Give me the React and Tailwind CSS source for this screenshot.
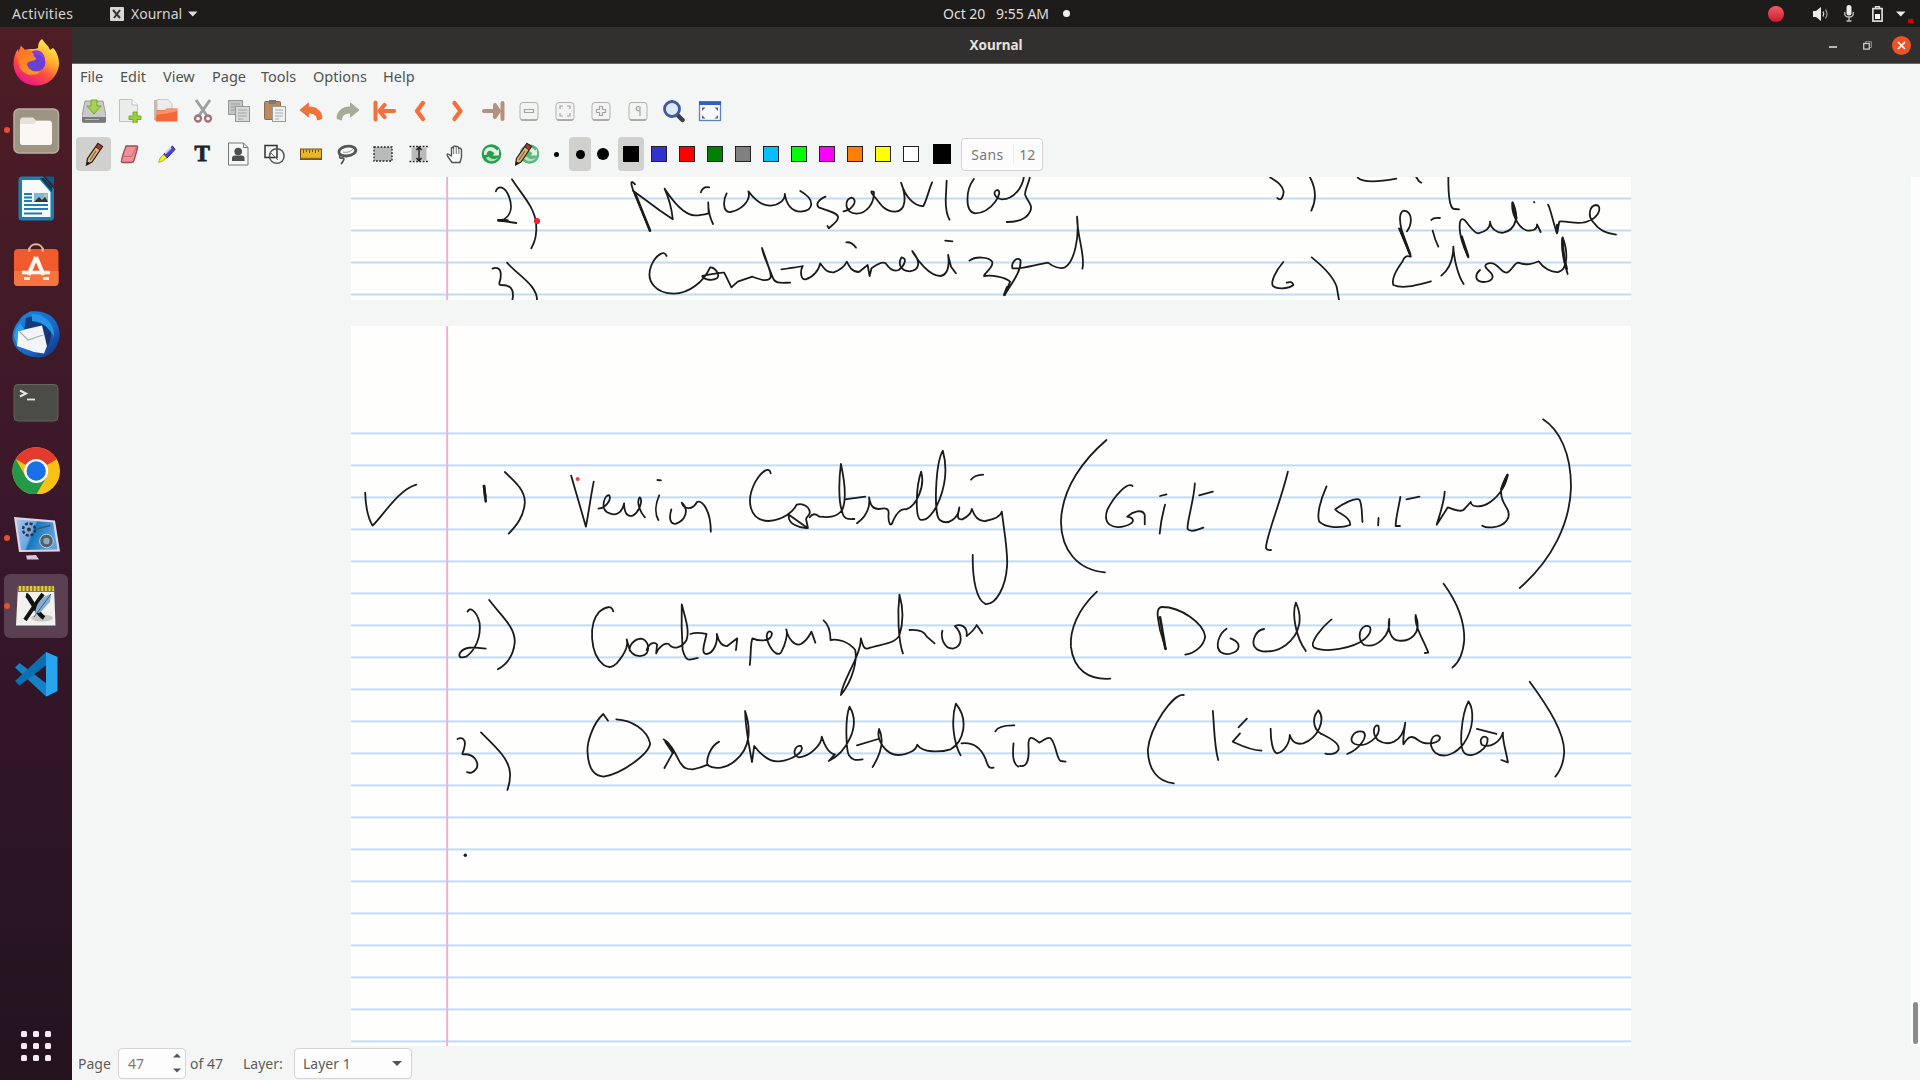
import React from "react";

const INK = "#1b1b1b";

/* ---------- handwriting ---------- */

function Strokes({ transform, thin = [], bold = [] }) {
  return (
    <g transform={transform} fill="none" stroke={INK} strokeLinecap="round" strokeLinejoin="round">
      {thin.map((d, i) => (
        <path key={i} d={d} strokeWidth="1.8" vectorEffect="non-scaling-stroke" />
      ))}
      {bold.map((d, i) => (
        <path key={"b" + i} d={d} strokeWidth="2.6" vectorEffect="non-scaling-stroke" />
      ))}
    </g>
  );
}

const upperLeft = [
  "M301 64 C305 45 320 48 328 80 C336 110 332 135 318 148 L306 151 L343 159",
  "M334 28 C355 75 380 110 384 160 C386 190 382 215 374 235",
  "M588 43 C580 30 578 35 584 60 L619 182",
  "M584 62 L640 122 L666 148 C664 120 658 85 649 56 C660 80 675 108 688 122 C705 140 715 139 740 130 L739 97 C739 125 743 145 749 162",
  "M724 67 C727 52 733 50 741 52",
  "M777 70 C770 90 768 128 785 126 C805 120 828 95 822 64 C835 90 850 108 868 107 C885 105 898 90 897 72 C900 100 910 125 930 125 C958 122 960 88 929 63",
  "M981 80 C965 90 960 105 968 113 C985 122 1008 128 1007 143 C1004 162 992 165 988 175 L985 168",
  "M1018 124 C1040 118 1048 88 1035 83 C1020 85 1018 128 1045 131 C1066 130 1082 100 1081 66 C1072 60 1075 70 1085 85 C1095 105 1105 126 1125 125 C1148 122 1148 80 1137 38 C1145 80 1165 110 1183 108 C1190 90 1195 55 1201 37",
  "M1231 32 L1229 90 Q1229 130 1237 149",
  "M1287 27 C1270 60 1268 125 1290 130 C1325 128 1350 62 1335 60 C1325 65 1330 85 1345 88 C1370 88 1390 50 1391 10",
  "M1404 10 C1402 40 1391 60 1393 75 C1398 95 1410 105 1403 125 C1395 150 1375 156 1355 156",
  "M294 296 C302 290 312 295 311 315 C312 335 303 343 312 345 C330 345 340 355 335 390",
  "M324 278 C350 320 385 345 386 390",
  "M653 258 C650 240 632 252 622 285 C608 335 632 370 668 371 C700 370 730 335 743 292 C752 290 765 315 757 325 C745 335 725 325 727 318 C745 314 765 305 772 308 L787 352 L800 335 L830 320 C845 328 862 338 868 322 C870 300 852 260 850 234 C855 250 862 290 873 325 C878 342 890 338 908 338",
  "M890 298 C905 295 930 290 934 288 C928 305 930 330 940 328 C955 322 968 300 970 280 C980 300 985 308 998 307 C1012 300 1020 290 1025 275 C1030 290 1035 305 1050 306 L1068 285 L1072 318 L1076 295 C1090 280 1100 275 1105 280 C1112 295 1120 308 1132 300 C1145 285 1150 265 1138 262 C1130 280 1135 303 1155 304 C1176 300 1178 275 1160 243 C1170 270 1195 318 1218 318 C1234 315 1237 285 1234 255 L1240 290 L1250 310",
  "M1024 217 Q1035 215 1044 233",
  "M1228 212 L1243 214",
  "M1278 272 C1290 258 1318 260 1325 275 C1328 295 1310 305 1308 318 C1325 315 1350 320 1362 335 L1350 376 C1365 340 1387 300 1383 270 C1375 258 1363 280 1367 295 C1385 298 1410 285 1440 278 C1450 290 1465 298 1475 292 C1495 275 1505 200 1500 140 C1500 200 1518 260 1511 296",
];
const upperLeftBold = ["M588 70 L619 182", "M306 151 L325 152", "M1356 352 L1350 374"];

const upperRight = [
  "M150 22 C170 35 188 45 191 65 C190 82 182 95 172 84",
  "M270 22 C285 50 292 85 274 122",
  "M413 23 C430 40 480 35 529 26",
  "M588 20 L597 34 L604 38",
  "M685 20 C685 60 686 120 705 117 L717 118",
  "M561 184 C578 160 577 125 552 122 C538 125 537 150 545 180 L572 258 L537 175",
  "M634 150 Q640 142 660 144",
  "M638 182 Q644 208 655 230",
  "M745 262 C732 235 720 205 719 175 C718 155 722 143 732 149 C745 160 760 190 775 190 C795 185 812 175 810 155 C812 175 830 190 850 188 C888 180 898 140 878 97 C872 120 890 172 920 181 C940 184 952 178 951 163 L962 186",
  "M942 96 L943 97",
  "M984 104 C990 110 1000 160 1011 190 L1018 155 C1035 150 1080 168 1105 153 C1138 142 1148 107 1128 105 C1108 108 1102 138 1120 157 C1140 185 1165 192 1188 194",
  "M572 260 C560 255 552 260 547 275 C525 305 515 330 520 345 C550 358 590 345 633 334",
  "M664 317 C685 300 700 270 700 230 C702 270 715 320 731 342",
  "M780 300 C763 315 765 335 790 336 C815 335 825 322 812 308 C795 292 790 285 805 280 C835 275 840 308 860 308 C875 305 882 278 895 278 C920 288 940 280 956 274 C970 295 995 308 1015 306 C1042 300 1046 250 1028 202 C1022 230 1030 270 1043 312",
  "M190 276 C165 305 153 335 158 347 C167 358 205 358 220 345 C218 335 210 335 200 338",
  "M275 262 C310 290 340 320 350 350 L357 390",
];
const upperRightBold = ["M541 178 L570 252", "M725 200 L744 258", "M1028 206 Q1027 250 1040 296", "M878 99 L889 145", "M1012 165 L1011 186"];

const lowerLeft = [
  "M35 218 C36 260 42 295 52 317 C75 290 110 210 153 194",
  "M357 156 C385 190 405 215 403 250 C400 290 385 315 366 341",
  "M510 167 L544 320 C550 280 555 230 562 185",
  "M573 266 C588 265 604 240 598 226 C587 222 578 262 592 276 C612 292 628 278 632 250 C632 275 638 292 652 287 C668 275 676 240 668 232 C660 245 668 275 680 292",
  "M713 226 C705 250 702 280 711 300",
  "M709 180 L717 181",
  "M741 268 C735 295 738 315 752 311 C775 300 782 268 765 248 C770 268 790 272 800 246 C812 240 832 270 832 335",
  "M970 160 C968 140 950 150 935 185 C912 240 920 302 965 303 C1000 300 1022 275 1030 254 C1045 248 1062 262 1060 280 C1058 290 1050 290 1052 300 L1056 324 C1038 326 1008 312 1012 284 L1055 324",
  "M1060 292 C1066 280 1074 280 1082 290 C1100 292 1120 295 1135 270 C1145 240 1140 180 1132 132 C1128 170 1125 240 1135 275 C1138 300 1150 297 1163 297",
  "M1141 238 L1188 230",
  "M1169 310 C1190 290 1200 265 1197 232 C1200 255 1205 268 1220 267 C1236 263 1243 265 1242 280 C1240 310 1248 325 1252 303 C1260 280 1270 265 1282 268 C1305 260 1327 200 1317 155 C1305 200 1303 290 1315 299 C1345 310 1388 190 1367 92 C1350 130 1345 285 1360 300 C1380 320 1405 290 1405 262 C1400 290 1400 300 1412 298 C1425 290 1432 280 1434 267 C1440 290 1450 305 1465 303 C1485 298 1500 290 1503 275 C1508 330 1518 400 1515 440 C1512 500 1490 555 1465 552 C1445 540 1435 480 1436 405",
  "M1432 179 Q1440 165 1460 164",
  "M271 575 C275 560 292 570 299 610 C302 650 290 690 268 710 C255 715 250 712 253 700 C262 680 280 680 313 686",
  "M321 540 C350 590 380 620 380 665 C378 700 365 730 341 748",
  "M607 574 C603 555 590 560 575 575 C550 610 552 700 585 735 C598 745 605 742 615 730 C635 700 642 675 638 658 L645 690 C655 712 675 712 684 700 C692 680 685 658 670 656 C655 658 643 675 645 692",
  "M684 690 C690 668 702 664 708 674 L706 700 C712 680 725 668 735 672 C745 690 765 685 776 660 C784 630 772 590 765 553 C764 600 765 650 767 690 C775 725 780 722 802 714",
  "M785 642 C800 635 815 640 822 642 C818 670 808 700 822 702 C838 700 848 670 846 642 C850 665 858 680 870 678 L893 655 L890 690",
  "M922 735 C925 700 923 670 928 655 C945 665 972 665 973 640 C967 625 955 640 965 670 C975 700 990 710 995 695 C1005 670 1010 640 1006 628 C1010 655 1025 680 1040 672 C1055 660 1060 645 1064 635 L1073 668",
  "M1092 601 C1105 615 1108 635 1108 660 C1125 655 1150 665 1165 690 C1170 720 1160 780 1132 825 C1135 780 1178 710 1178 655 C1182 675 1185 690 1195 685 C1225 672 1258 672 1267 645 C1278 600 1275 560 1267 524 C1262 580 1264 660 1275 700",
  "M1290 630 C1310 628 1325 635 1330 650 L1348 670",
  "M1366 632 C1362 650 1368 685 1390 686 C1415 680 1412 640 1395 618 C1405 612 1425 615 1422 648 C1430 640 1440 630 1445 615 L1458 640",
  "M248 957 C258 950 268 958 264 980 C262 1000 255 1003 262 1003 C285 1000 298 1025 292 1045 C285 1060 275 1060 270 1056",
  "M302 937 C340 985 368 1020 369 1060 C370 1080 367 1095 363 1110",
  "M595 902 L584 882 C560 910 545 970 548 1000 C550 1050 565 1068 585 1070 C630 1060 690 1000 692 970 C685 930 650 900 614 898",
  "M723 958 C740 970 750 1000 760 1025 C770 1045 775 1048 790 1048 C805 1045 815 1040 825 1034",
  "M725 1044 L746 995",
  "M851 965 C830 980 820 1020 825 1036 C840 1050 870 1045 890 1020 C922 985 926 930 911 873 C912 930 922 990 927 1026 L932 978 C945 1000 965 1028 990 1024 C1020 1020 1050 995 1040 978 C1025 975 1018 1005 1035 1012 C1060 1010 1087 975 1088 950 C1095 980 1105 1000 1118 1003 L1104 1023 C1142 1000 1180 920 1152 860 C1140 900 1145 990 1150 1005 C1160 1025 1170 1020 1182 1018",
  "M1169 976 L1218 957",
  "M1205 1041 C1225 1000 1232 960 1220 927 C1213 960 1235 1005 1265 1005 C1290 1003 1305 990 1308 974 C1320 998 1360 998 1385 988 C1415 965 1428 900 1397 851 C1385 900 1392 970 1408 1006",
  "M1410 970 C1440 965 1455 985 1465 1015 C1472 1045 1475 1045 1484 1043",
  "M1488 934 Q1495 915 1532 916",
  "M1530 970 C1528 1000 1527 1030 1541 1040",
];
const lowerLeftBold = ["M309 198 L313 244", "M309 198 L312 230", "M728 965 L745 998"];

const lowerRight = [
  "M226 120 C170 175 110 260 107 365 C108 450 150 510 222 517",
  "M294 258 C280 245 245 290 228 330 C215 375 245 388 275 378 C300 370 302 355 280 350 C295 335 320 325 326 345 L326 373",
  "M379 314 Q368 360 365 401",
  "M366 288 L383 283",
  "M457 250 C455 300 435 370 438 387 C445 397 465 390 479 383",
  "M468 286 L504 275",
  "M700 215 C680 310 640 420 643 445 C645 452 650 450 656 450",
  "M801 259 C785 300 775 345 782 365 C800 385 840 385 863 375 C865 350 830 340 824 328 C845 310 880 290 888 300 C895 320 893 345 895 366",
  "M937 354 L936 376",
  "M994 291 C990 320 980 365 982 378 L993 378",
  "M1010 298 L1044 290",
  "M1110 275 C1108 310 1095 350 1089 374 L1118 322 C1135 328 1155 340 1163 325 L1178 306 C1180 325 1210 322 1230 305 C1255 285 1272 250 1274 223 C1255 260 1250 285 1270 320 C1288 350 1270 378 1235 382 C1220 383 1212 380 1208 377",
  "M1367 58 C1410 90 1440 160 1440 260 C1438 370 1390 480 1306 564",
  "M201 575 C150 630 130 690 133 740 C140 810 180 840 236 836",
  "M381 748 L366 690 C362 660 352 625 370 621 C420 620 480 670 484 710 C480 740 455 760 432 764",
  "M540 686 C520 700 508 740 525 757 C545 770 575 755 571 735 C568 722 555 718 550 715",
  "M638 687 C615 690 605 725 613 740 C625 760 665 760 695 735 C735 700 738 650 721 608 C710 640 720 710 747 753",
  "M814 658 C790 680 755 730 768 742 C800 760 870 745 900 718 C922 695 920 675 903 678 C883 688 883 722 900 735 C930 745 970 710 965 657 C960 690 970 722 990 722 C1020 725 1052 700 1034 645 C1030 680 1055 720 1067 758 L1058 759",
  "M1107 551 C1145 610 1162 670 1161 720 C1158 760 1150 785 1130 803",
  "M428 885 C400 880 340 980 334 1050 C335 1110 360 1145 402 1150",
  "M504 933 C508 990 508 1040 518 1080",
  "M593 956 L571 982 M575 1000 L556 1025 C575 1035 600 1050 631 1052",
  "M655 986 C655 1020 660 1058 672 1060 C690 1055 705 1030 705 1005 C710 1025 720 1035 740 1030 C778 1015 800 960 780 931 C763 950 765 985 785 1000 C810 1015 838 1030 832 1050 C825 1062 810 1064 798 1061",
  "M855 1062 C885 1050 915 1005 895 995 C872 990 855 1022 875 1032 C905 1045 944 1010 937 978 C925 970 918 1000 935 1020 C960 1040 1000 1030 1007 968 C1003 1000 1000 1020 1002 1033 C1015 1008 1025 1005 1040 1020 C1060 1038 1102 1030 1097 1010 C1080 995 1062 1030 1085 1058 C1110 1078 1140 1060 1160 1030 C1187 985 1187 930 1172 904 C1155 940 1143 1050 1165 1062 C1185 1075 1225 1045 1222 1015 C1210 1000 1198 1020 1208 1035 C1230 1045 1255 1025 1262 998 C1260 1020 1270 1050 1275 1087 L1258 1080",
  "M1194 987 L1245 1002",
  "M1332 845 C1380 920 1425 1000 1422 1060 C1420 1090 1410 1115 1399 1130",
  "M0 1098 C18 1102 25 1080 22 1035 C22 1005 32 1010 50 1028 C65 1020 72 1008 80 1015 C95 1030 95 1080 107 1083 L119 1085",
];
const lowerRightBold = ["M366 652 L380 746", "M1274 226 L1258 268"];

const Rules = ({ from, count }) => (
  <g>
    {Array.from({ length: count }, (_, i) => (
      <rect key={i} x="351" y={from + i * 32} width="1280" height="2" fill="#bedcf6" />
    ))}
  </g>
);

const UpperPage = () => (
  <svg className="block shrink-0 bg-[#fefefd]" width="1280" height="123" viewBox="351 177 1280 123">
    <Rules from={197.5} count={4} />
    <rect x="446.2" y="177" width="1.9" height="123" fill="#f0abd6" />
    <Strokes transform="translate(350 170) scale(.4847 .33333)" thin={upperLeft} bold={upperLeftBold} />
    <Strokes transform="translate(1220 170) scale(.33333)" thin={upperRight} bold={upperRightBold} />
    <circle cx="537" cy="221" r="3.1" fill="#f8202c" />
  </svg>
);

const LowerPage = () => (
  <svg className="block shrink-0 bg-[#fefefd]" width="1280" height="720" viewBox="351 326 1280 720">
    <Rules from={432.4} count={20} />
    <rect x="446.2" y="326" width="1.9" height="720" fill="#f0abd6" />
    <Strokes transform="translate(350 420) scale(.43367 .33333)" thin={lowerLeft} bold={lowerLeftBold} />
    <Strokes transform="translate(1020 400) scale(.38265 .33333)" thin={lowerRight} bold={lowerRightBold} />
    <circle cx="577.7" cy="479" r="2" fill="#fb3b3b" />
    <circle cx="465.3" cy="855.3" r="1.7" fill={INK} />
  </svg>
);

/* ---------- dock icons (48 x 48) ---------- */

const Dock = ({ children }) => (
  <svg width="48" height="48" viewBox="0 0 48 48">
    {children}
  </svg>
);

const Firefox = () => (
  <Dock>
    <defs>
      <linearGradient id="fx" x1=".85" y1=".05" x2=".3" y2="1">
        <stop offset="0" stopColor="#fff44f" />
        <stop offset=".35" stopColor="#ffb02e" />
        <stop offset=".65" stopColor="#ff4f3f" />
        <stop offset="1" stopColor="#e9138a" />
      </linearGradient>
      <linearGradient id="fxo" x1="0" y1="0" x2="1" y2="1">
        <stop offset="0" stopColor="#ff6a2a" />
        <stop offset="1" stopColor="#ffa31f" />
      </linearGradient>
    </defs>
    <path d="M30 1 C34 7 37 8 38 12 L41 10 C45 14 47 20 47 26 C46 39 36 47.500 24 47.500 C11 47.500 2 38 1.500 26 C1.500 20 3 15 6 11 L7 16 L9 8 L13 12 C18 10 22 12 26 10 C26 6 27 3 30 1 Z" fill="url(#fx)" />
    <circle cx="24" cy="24" r="9.500" fill="#6a3fd4" />
    <path d="M17 15 C24 9 34 13 33 24 C31 18 26 15 17 15Z" fill="#8d3ce0" />
    <path d="M5 17 L9 8 L13 12.500 C17 11 20 13 22 17 C20 19 25 19 24 21 C21 24 17 22 15 26 C16 32 22 35 29 33 C22 40 9 37 7 27Z" fill="url(#fxo)" />
  </Dock>
);
const Files = () => (
  <Dock>
    <rect x="2" y="3" width="44.500" height="44" rx="5" fill="#9d9483" />
    <rect x="2" y="3" width="44.500" height="44" rx="5" fill="none" stroke="#b8b09f" strokeWidth="1.500" />
    <path d="M8 15 Q8 11.500 11 11.500 H21 L24 14.500 H37 Q40 14.500 40 18 V36 Q40 39 37 39 H11 Q8 39 8 36Z" fill="#e7e1d8" />
    <path d="M8 18 H22 L25 15 H37 Q40 15 40 18 V36 Q40 39 37 39 H11 Q8 39 8 36Z" fill="#fbf8f3" />
  </Dock>
);
const Writer = () => (
  <Dock>
    <path d="M10 2.500 H31 L42 15 V43 Q42 46.500 38.500 46.500 H10 Q6.500 46.500 6.500 43 V6 Q6.500 2.500 10 2.500Z" fill="#1d7fae" />
    <path d="M33 2.500 H42 V12Z" fill="#0c5f86" />
    <path d="M10 6 H28 L38.500 18 V43 H10Z" fill="#f6fafc" />
    <path d="M28 4 L40 18 V13 L32 4Z" fill="#083f59" />
    <rect x="22" y="19" width="14" height="9" fill="#7fb9d4" />
    <path d="M22 28 L27 23 L30 26 L33 23 L36 28Z" fill="#333" />
    <circle cx="33.500" cy="21.500" r="1.300" fill="#f2d24b" />
    <path d="M12 20 h8 M12 23.500 h8 M12 27 h8 M12 31 h24 M12 35 h24 M12 39.500 h18" stroke="#217fae" strokeWidth="1.800" />
  </Dock>
);
const Software = () => (
  <Dock>
    <path d="M17 9 C17 0 31 0 31 9" fill="none" stroke="#e8b79a" strokeWidth="2" />
    <rect x="2" y="7" width="44.500" height="37" rx="4" fill="#f05a2d" />
    <path d="M2 29 H46.500 V40 Q46.500 44 42.500 44 H6 Q2 44 2 40Z" fill="#f7733f" />
    <path d="M17.300 10 V6 M30.700 10 V6" stroke="#e8b79a" strokeWidth="2" />
    <path d="M24 15 L16.500 33 M24 15 L31.500 33" stroke="#fff6ef" strokeWidth="4.200" fill="none" strokeLinejoin="round" />
    <path d="M10 30.500 H38" stroke="#fff6ef" strokeWidth="3.600" />
    <path d="M12 36.500 h6 M31 36.500 h6" stroke="#fff6ef" strokeWidth="3" />
  </Dock>
);
const Thunderbird = () => (
  <Dock>
    <defs>
      <linearGradient id="tb" x1="0" y1="0" x2="1" y2="1">
        <stop offset="0" stopColor="#1a8ae0" />
        <stop offset=".6" stopColor="#1868c4" />
        <stop offset="1" stopColor="#122a78" />
      </linearGradient>
    </defs>
    <path d="M18 1.500 C40 -1 49 14 47.500 27 C46 40 37 47 27 47.500 C12 47 1 39 .500 27 C1 20 3 15 7 11 C9 6 14 4 18 1.500Z" fill="url(#tb)" />
    <path d="M14 8 C26 3 40 11 39 26 C38 34 34 40 31 43 L12 22Z" fill="#15275f" opacity=".75" />
    <path d="M20 4 C34 4 43 15 42 27 C38 20 33 12 20 11Z" fill="#2496e8" />
    <path d="M6 21 L30 15.500 L35 36 L32 43.500 L22 42 L5 36Z" fill="#f3f4f8" />
    <path d="M7 21 L16 30 L31 25" fill="none" stroke="#a9aab8" strokeWidth="1.100" />
    <path d="M2 27 C2 21 5 17 8 13 L13 20 L6 21 L5 34Z" fill="#2a9df0" />
  </Dock>
);
const Terminal = () => (
  <Dock>
    <rect x="2" y="6.500" width="44" height="36.500" rx="4" fill="#4b4b47" stroke="#65655f" strokeWidth="1" />
    <path d="M8 12.500 L14 15.500 L8 18.500" fill="none" stroke="#e6e6e0" strokeWidth="2" />
    <path d="M15 21.500 H23" stroke="#e6e6e0" strokeWidth="1.800" />
  </Dock>
);
const Chrome = () => (
  <Dock>
    <circle cx="24.200" cy="25" r="23.800" fill="#fbc116" />
    <path d="M24.200 25 L3.600 13.100 A23.800 23.800 0 0 1 44.800 13.100 Z" fill="#e33b2e" />
    <path d="M24.200 13.100 H44.800 L24.200 25Z" fill="#e33b2e" />
    <path d="M3.600 13.100 A23.800 23.800 0 0 0 24.200 48.800 L34.500 31 L13.900 31Z" fill="#229a4a" />
    <circle cx="24.200" cy="25" r="12" fill="#fff" />
    <circle cx="24.200" cy="25" r="9.700" fill="#1a70e6" />
  </Dock>
);
const Screencast = () => (
  <Dock>
    <defs>
      <linearGradient id="sc" x1="0" y1="0" x2="1" y2=".3">
        <stop offset="0" stopColor="#a8c5ee" />
        <stop offset=".45" stopColor="#6aa5e2" />
        <stop offset=".5" stopColor="#1478bd" />
        <stop offset="1" stopColor="#5fa0dd" />
      </linearGradient>
    </defs>
    <g transform="translate(0 1.500)">
      <path d="M2 1.500 L43 5 L48 36 L7 36.500Z" fill="#dcd5e4" />
      <path d="M4.500 4 L41 7 L45.500 34 L9 34.500Z" fill="url(#sc)" />
      <circle cx="17" cy="14" r="6" fill="none" stroke="#27364a" strokeWidth="2.500" strokeDasharray="3 1.700" />
      <circle cx="17" cy="14" r="2" fill="#333" />
      <path d="M23 14 L38 10" stroke="#3a5676" strokeWidth="1.500" />
      <circle cx="34.500" cy="25.500" r="6.800" fill="#4b6172" stroke="#c3ced8" strokeWidth="1" />
      <circle cx="34.500" cy="25.500" r="3.200" fill="#96a6b3" />
      <path d="M14 40 L24 39.500 L27 44 L15 44Z" fill="#cfc8d6" />
    </g>
  </Dock>
);
const XournalIcon = () => (
  <Dock>
    <path d="M6 4 H42 L43.500 43.500 H4Z" fill="#f1f1ef" />
    <path d="M6 4 L42 4 L42.300 10 H5.700Z" fill="#8b7a2a" />
    <path d="M7 6.500 H42" stroke="#dfc94f" strokeWidth="5" strokeDasharray="2 1.700" />
    <ellipse cx="30" cy="36" rx="11" ry="3.500" fill="#c7c7c4" />
    <path d="M14 13 C18 14 23 30 32 36" fill="none" stroke="#111" strokeWidth="4.500" />
    <path d="M31 12 C25 20 20 28 13 38" fill="none" stroke="#111" strokeWidth="4" />
    <path d="M39 12 C30 14 24 21 23 32 L29 30 L34 24 L38 20Z" fill="#86aed0" />
    <path d="M39 12 L22 35" stroke="#3f5f80" strokeWidth="1" />
  </Dock>
);
const VsCode = () => (
  <Dock>
    <path d="M34 2 L45 7 V41 L34 46.500 L3 17.500 L7.500 13 L35 34 V14 Z" fill="#1582c8" />
    <path d="M34 2 L3 31 L7.500 35.500 L35 14.500 Z" fill="#0a6fb4" />
    <path d="M34 2 L45.500 7 V41 L34 46.500 Z" fill="#29a5ee" />
  </Dock>
);

const dockItems = [
  { icon: Firefox },
  { icon: Files, running: true },
  { icon: Writer },
  { icon: Software },
  { icon: Thunderbird },
  { icon: Terminal },
  { icon: Chrome },
  { icon: Screencast, running: true },
  { icon: XournalIcon, running: true, active: true },
  { icon: VsCode },
];

const Sidebar = () => (
  <aside className="flex w-[72px] shrink-0 flex-col items-center bg-gradient-to-b from-[#4f1d24] via-[#38172b] to-[#22131f] pt-px">
    {dockItems.map(({ icon: Icon, running, active }, i) => (
      <div key={i} className="grid h-[68px] w-full grid-cols-[4px_64px_4px] items-center">
        <span />
        <div className={active ? "relative flex h-16 items-center justify-center rounded-md bg-[#5a4050]" : "relative flex h-16 items-center justify-center"}>
          {running && <span className="absolute left-0 h-1.5 w-1.5 rounded-full bg-[#e2532c]" />}
          <Icon />
        </div>
      </div>
    ))}
    <div className="mt-auto mb-[19px] grid grid-cols-3 gap-[6px]">
      {Array.from({ length: 9 }, (_, i) => (
        <span key={i} className="h-[6px] w-[6px] rounded-[1.500px] bg-[#f7ecf3]" />
      ))}
    </div>
  </aside>
);

/* ---------- toolbar icons (24 x 24) ---------- */

const Ico = ({ children }) => (
  <svg width="24" height="24" viewBox="0 0 24 24" fill="none">
    {children}
  </svg>
);

const mainIcons = [
  <Ico>
    <path d="M3 2 H21 L24 17 V22 Q24 23.500 22 23.500 H2 Q0 23.500 0 22 V17Z" fill="#c9c9c7" stroke="#8c8c8a" strokeWidth=".8" />
    <path d="M0 18 H24 V22 Q24 23.500 22 23.500 H2 Q0 23.500 0 22Z" fill="#77787a" />
    <path d="M3 20.500 h14" stroke="#b5b5b5" />
    <path d="M9 1 H15 V7 H19 L12 15 L5 7 H9Z" fill="#a3d44c" stroke="#6b9a20" strokeWidth=".8" />
  </Ico>,
  <Ico>
    <path d="M1.500 .500 H14 L19.500 6 V22.500 H1.500Z" fill="#ececea" stroke="#c1c1bf" />
    <path d="M14 .500 V6 H19.500" fill="#fff" stroke="#c1c1bf" />
    <path d="M15 13 h4 v4 h4 v3.500 h-4 v4 h-4 v-4 h-4 V17 h4Z" fill="#9bd03c" stroke="#6a9c20" strokeWidth=".8" />
  </Ico>,
  <Ico>
    <path d="M0 1 H7 V21 H0Z" fill="#c8b9ae" />
    <path d="M3 .500 H14 L18 5 V16 H3Z" fill="#ececec" stroke="#bdbdbd" strokeWidth=".8" />
    <path d="M1.500 22.500 L3 11 H11 L12.500 9.500 H23.500 V22.500Z" fill="#f4673a" />
    <path d="M2.500 16 C10 14 16 15 23 12 V10 H12.500 L11 11.500 H3.500Z" fill="#f99368" />
  </Ico>,
  <Ico>
    <path d="M5 1 L15.500 16 M19 1 L8.500 16" stroke="#9d9fa0" strokeWidth="3" />
    <circle cx="7" cy="19.500" r="3" stroke="#a2717a" strokeWidth="2.300" />
    <circle cx="17" cy="19.500" r="3" stroke="#a2717a" strokeWidth="2.300" />
  </Ico>,
  <Ico>
    <rect x="1.500" y="1.500" width="14" height="14" fill="#c4c6c5" stroke="#969897" />
    <path d="M4 5 h9 M4 8 h9 M4 11 h9" stroke="#9b9d9c" />
    <rect x="8.500" y="7.500" width="14" height="15" fill="#d6d8d7" stroke="#969897" />
    <path d="M11 11 h9 M11 14 h9 M11 17 h9 M11 20 h5" stroke="#a1a3a2" />
  </Ico>,
  <Ico>
    <rect x="1.500" y="2.500" width="16" height="18" rx="1" fill="#b98a5e" stroke="#8f6a48" />
    <path d="M6 1 h7 v4 h-7Z" fill="#777a7c" />
    <rect x="9.500" y="7.500" width="13" height="15" fill="#f0f0ef" stroke="#9a9a98" />
    <path d="M12 11 h8 M12 14 h8 M12 17 h8 M12 20 h4" stroke="#aaa" />
  </Ico>,
  <Ico>
    <path d="M1 11 L9.500 4 V8 C17 7.500 23 12 23 19.500 L18.500 21 C18 16 15 14 9.500 14 V18Z" fill="#f37239" stroke="#e8622e" strokeWidth=".8" />
  </Ico>,
  <Ico>
    <path d="M23 11 L14.500 4 V8 C7 7.500 1 12 1 19.500 L5.500 21 C6 16 9 14 14.500 14 V18Z" fill="#a3ad97" stroke="#949f88" strokeWidth=".8" />
  </Ico>,
  <Ico>
    <path d="M3.500 3.500 V20.500" stroke="#f3703d" strokeWidth="4" strokeLinecap="round" />
    <path d="M22 12 H8 M12.500 6 L7.500 12 L12.500 18" stroke="#f3703d" strokeWidth="4.200" strokeLinecap="round" strokeLinejoin="round" />
  </Ico>,
  <Ico>
    <path d="M15 4 L9 12 L15 20" stroke="#f3703d" strokeWidth="4.400" strokeLinecap="round" strokeLinejoin="round" />
  </Ico>,
  <Ico>
    <path d="M10.500 4 L16.500 12 L10.500 20" stroke="#f3703d" strokeWidth="4.400" strokeLinecap="round" strokeLinejoin="round" />
  </Ico>,
  <Ico>
    <path d="M21.500 4 V20" stroke="#b4917f" strokeWidth="4" strokeLinecap="round" />
    <path d="M3 12 H17 M14 6 L18 12 L14 18Z" stroke="#b4917f" fill="#b4917f" strokeWidth="4" strokeLinecap="round" strokeLinejoin="round" />
  </Ico>,
  ...["M7.500 10.500 h9 v3 h-9Z", "M7 10 V7 h3 M14 7 h3 v3 M17 14 v3 h-3 M10 17 H7 v-3 M9.500 9.500 l.1 .1 M14.500 14.500 l.1 .1", "M10.500 7.500 h3 v3 h3 v3 h-3 v3 h-3 v-3 h-3 v-3 h3Z", "M10 9 Q11 7 14 8 V17 M10 9 Q10 12 14 12"].map((d, i) => (
    <Ico key={i}>
      <rect x="3" y="3.500" width="18" height="18" rx="3" fill="#f3f3f2" stroke="#b1b1af" />
      <path d="M4 20.800 H20" stroke="#9c9c9a" strokeWidth="1.200" />
      <path d={d} stroke="#a3a3a1" strokeWidth="1.200" />
    </Ico>
  )),
  <Ico>
    <path d="M14.500 15 L20.500 21" stroke="#3f4146" strokeWidth="4.500" strokeLinecap="round" />
    <circle cx="10" cy="10" r="7.500" fill="#dfe8f8" stroke="#3d5a9d" strokeWidth="2.800" />
  </Ico>,
  <Ico>
    <rect x="1.500" y="3" width="21" height="18.500" fill="#f7f9fc" stroke="#5e83bd" strokeWidth="1.300" />
    <rect x="1" y="2.300" width="22" height="3.700" fill="#2f60bd" />
    <path d="M4 12 V8.500 H7.500Z M20 12 V8.500 H16.500Z M4 16 V19.500 H7.500Z M20 16 V19.500 H16.500Z" fill="#666" />
  </Ico>,
];

const Recycle = ({ dim }) => (
  <>
    <circle cx="12.500" cy="12" r="9.800" fill={dim ? "#5bb980" : "#23a049"} />
    <path d="M5 13 C4 5 13 2 18 8.500 L20 7 V13.500 H13.500 L15.500 11.500 C12 7.500 8 8 7.500 13Z" fill="#dff3e2" />
    <path d="M19.500 15 C16 21 9 20 7 16 L9.500 14.500 C12 17.500 16 18 19.500 15Z" fill="#b5e2bf" />
  </>
);
const Pencil = () => (
  <>
    <path d="M16 1.500 L20.500 4.500 L10 20 L4.500 23 L5.500 16.500Z" fill="#dcb47c" stroke="#2e2418" strokeWidth="1.300" />
    <path d="M16 1.500 L20.500 4.500 L18 8 L13.700 5Z" fill="#9e3a35" stroke="#2e2418" strokeWidth=".8" />
    <path d="M14 9 L8 18" stroke="#8b5d22" strokeWidth="1.200" />
    <path d="M5.500 19.500 L4.500 23 L8 21Z" fill="#111" />
  </>
);

const toolIcons = [
  <Ico><Pencil /></Ico>,
  <Ico>
    <path d="M8 4 H18.500 Q20 4 19.500 6 L16 18.500 Q15.500 20.500 13.500 20.500 H5 Q3 20.500 3.500 18.500 L4.500 14Z" fill="#ef9094" stroke="#9d4a4e" strokeWidth="1.300" strokeLinejoin="round" />
    <path d="M4.500 14.500 H13.500 L18.500 5" stroke="#c5686d" />
  </Ico>,
  <Ico>
    <path d="M18.500 4 L21 7.500 L13 16 L9.500 12.500Z" fill="#4a49c9" stroke="#24236b" />
    <path d="M17 5.500 L11 11.500" stroke="#cdd0f5" strokeWidth="2" />
    <path d="M9.500 12.500 L13 16 L8 19.500 L4.500 20.500 L6 16Z" fill="#f4ee1c" stroke="#8b8720" strokeWidth=".6" />
  </Ico>,
  <span className="font-['Liberation_Serif',serif] text-[23px] leading-6 font-bold text-[#222] [-webkit-text-stroke:.8px_#222]">T</span>,
  <Ico>
    <path d="M2.500 1 H17.500 L22 5.500 V23 H2.500Z" fill="#f7f7f7" stroke="#777" />
    <path d="M17.500 1 V5.500 H22" stroke="#777" />
    <circle cx="12.200" cy="9.500" r="3.800" fill="#4c4e50" />
    <path d="M6 19 V16 Q6 13.500 9 13.500 H15.500 Q18.500 13.500 18.500 16 V19Z" fill="#4c4e50" />
  </Ico>,
  <Ico>
    <rect x="3" y="3.500" width="12" height="12" stroke="#303030" strokeWidth="1.500" />
    <circle cx="14.800" cy="14" r="7.300" stroke="#555" strokeWidth="1.500" />
    <path d="M8 10 L16 18" stroke="#666" />
  </Ico>,
  <Ico>
    <rect x="1.500" y="7" width="21" height="10.500" fill="#e9b52c" stroke="#6e5412" />
    <path d="M4.500 7.500 v3.500 M7.500 7.500 v2.500 M10.500 7.500 v3.500 M13.500 7.500 v2.500 M16.500 7.500 v3.500 M19.500 7.500 v2.500" stroke="#6e5412" />
    <path d="M2 16.500 H22" stroke="#8a6a16" strokeWidth="1.500" />
  </Ico>,
  <Ico>
    <path d="M4.500 12 C2 7 9 4 14 4.200 C20 4.500 23 8 19 11.500 C15 14.500 8 15 4.500 12Z" stroke="#555" strokeWidth="2.800" />
    <path d="M6 12 C4 14 4 16.500 7 16 C10 15.500 9 19 6 22" stroke="#555" strokeWidth="1.800" />
    <path d="M8 10 C11 11 15 10 18 7" stroke="#999" />
  </Ico>,
  <Ico>
    <rect x="3" y="5" width="18" height="14" fill="#b9b9b9" stroke="#222" strokeWidth="1.300" strokeDasharray="1.800 1.500" />
  </Ico>,
  <Ico>
    <rect x="4.500" y="5.500" width="15" height="13" fill="#b9b9b9" />
    <path d="M2.500 4.500 h19 M2.500 19.500 h19" stroke="#222" strokeWidth="1.300" strokeDasharray="1.800 1.500" />
    <path d="M12 5 V19 M9.500 8 L12 5 L14.500 8 M9.500 16 L12 19 L14.500 16" stroke="#222" strokeWidth="1.400" />
  </Ico>,
  <Ico>
    <path d="M9 20.500 L4.500 14 Q3.500 12 5 12 L8.500 14 V6 Q9.500 4.500 10.500 6 V4.500 Q12 3 13 5 L13.500 4.500 Q15.500 4 15.700 6.500 Q18 5.500 18.500 8 V15 L17 20.500Z" fill="#fafafa" stroke="#555" strokeWidth="1.400" strokeLinejoin="round" />
    <path d="M10.700 6 V12 M13.300 5.500 V12 M15.900 7 V12" stroke="#777" />
  </Ico>,
  <Ico><Recycle /></Ico>,
  <Ico>
    <g transform="translate(2 0)"><Recycle dim /></g>
    <g transform="translate(-4 0)"><Pencil /></g>
  </Ico>,
];

/* ---------- chrome ---------- */

const menus = [
  ["File", "w-[40px]"],
  ["Edit", "w-[43px]"],
  ["View", "w-[49px]"],
  ["Page", "w-[49px]"],
  ["Tools", "w-[52px]"],
  ["Options", "w-[70px]"],
  ["Help", "w-[50px]"],
];

const swatches = ["bg-[#3333cc]", "bg-[#ff0000]", "bg-[#008000]", "bg-[#808080]", "bg-[#00c0ff]", "bg-[#00ff00]", "bg-[#ff00ff]", "bg-[#ff8000]", "bg-[#ffff00]", "bg-white"];

const TopBar = () => (
  <header className="grid h-[27px] shrink-0 grid-cols-3 items-center bg-[#1d1c1b] text-[13.500px] text-[#d6d4d0]">
    <div className="flex items-center pl-3">
      <span className="w-[98px] text-[14px] tracking-[.3px]">Activities</span>
      <svg width="14" height="14" viewBox="0 0 14 14">
        <rect width="14" height="14" rx="1" fill="#d8d8d6" />
        <path d="M3 3 L10 11 M10 3 L4 11" stroke="#333" strokeWidth="2" />
      </svg>
      <span className="ml-[7px] w-[57px] text-[14px]">Xournal</span>
      <svg width="10" height="6" viewBox="0 0 10 6"><path d="M0 .500 H9.500 L4.750 5.500Z" fill="#e0dedb" /></svg>
    </div>
    <div className="flex items-center pl-[303px] text-[#e0dedb]">
      <span className="w-[53px] text-[14px] whitespace-nowrap">Oct 20</span>
      <span className="w-[67px] text-[14px] whitespace-nowrap">9:55 AM</span>
      <span className="h-[7px] w-[7px] rounded-full bg-[#f0f0f0]" />
    </div>
    <div className="relative flex h-full items-center pl-[488px]">
      <span className="h-4 w-4 rounded-full bg-gradient-to-b from-[#f45a64] to-[#c9142f]" />
      <svg className="ml-[29px]" width="16" height="16" viewBox="0 0 16 16" fill="none">
        <path d="M0 5 H3 L8 1 V15 L3 11 H0Z" fill="#ececea" />
        <path d="M10 5.500 Q11.500 8 10 10.500" stroke="#d0d0ce" strokeWidth="1.400" />
        <path d="M12.500 3.500 Q15.500 8 12.500 12.500" stroke="#8d8d8b" strokeWidth="1.400" />
      </svg>
      <svg className="ml-[15px]" width="10" height="17" viewBox="0 0 10 17" fill="none">
        <rect x="2.500" y="0" width="5" height="10.500" rx="2.500" fill="#ececea" />
        <path d="M.700 7 V8.500 Q.700 12 5 12 Q9.300 12 9.300 8.500 V7 M5 12 V16 M2.500 16 H7.500" stroke="#c2c2c0" strokeWidth="1.300" />
      </svg>
      <svg className="ml-[18px]" width="11" height="16" viewBox="0 0 11 16" fill="none">
        <path d="M3.500 2.500 V.800 H7.500 V2.500" stroke="#dcdcda" strokeWidth="1.400" />
        <rect x=".900" y="2.600" width="9.200" height="12.500" stroke="#dcdcda" strokeWidth="1.700" />
        <rect x="3" y="8" width="5" height="5" fill="#fff" />
      </svg>
      <svg className="ml-[13px]" width="10" height="6" viewBox="0 0 10 6"><path d="M0 .500 H9.500 L4.750 5.500Z" fill="#ececea" /></svg>
      <span className="absolute right-[7px] bottom-[4px] h-1 w-[5px] bg-[#d30505]" />
    </div>
  </header>
);

const TitleBar = () => (
  <div className="grid h-[37px] shrink-0 grid-cols-[1fr_auto_1fr] items-center border-b border-[#6a6a68] bg-[#31302f]">
    <span />
    <span className="text-[13.500px] font-bold text-[#e4e2de]">Xournal</span>
    <div className="flex items-center justify-end pr-[9px]">
      <span className="mt-[4px] h-[2px] w-2 bg-[#b9b8b5]" />
      <svg className="ml-[26px]" width="9" height="9" viewBox="0 0 9 9" fill="none">
        <path d="M2.500 2 V.700 H8.300 V6.500 H7" stroke="#96958f" />
        <rect x=".700" y="2.500" width="5.600" height="5.600" stroke="#c9c8c4" strokeWidth="1.300" />
      </svg>
      <span className="ml-[20px] flex h-[19px] w-[19px] items-center justify-center rounded-full bg-[#ec5427]">
        <svg width="9" height="9" viewBox="0 0 9 9"><path d="M1 1 L8 8 M8 1 L1 8" stroke="#fff" strokeWidth="1.700" /></svg>
      </span>
    </div>
  </div>
);

const Toolbar = () => (
  <>
    <div className="flex h-7 shrink-0 items-center pb-[2px] pl-2 text-[14.500px] text-[#51534f]">
      {menus.map(([name, width]) => (
        <span key={name} className={width}>{name}</span>
      ))}
    </div>
    <div className="flex h-[38px] shrink-0 items-center pl-[3.900px]">
      {mainIcons.map((icon, i) => (
        <span key={i} className="flex w-[36.240px] shrink-0 justify-center">{icon}</span>
      ))}
    </div>
    <div className="flex h-[47px] shrink-0 items-start pt-[7px]">
      <div className="flex h-[34px] items-center pl-1">
        {toolIcons.map((icon, i) => (
          <span key={i} className={i === 0 ? "mr-[1px] flex h-[34px] w-[35px] items-center justify-center rounded bg-[#d0d0cf]" : "flex h-[34px] w-[36.100px] items-center justify-center"}>{icon}</span>
        ))}
        <span className="ml-[9px] h-[5px] w-[5px] rounded-full bg-black" />
        <span className="ml-[10px] flex h-[34px] w-[22px] items-center justify-center rounded bg-[#d0d0cf]">
          <span className="h-[9px] w-[9px] rounded-full bg-black" />
        </span>
        <span className="ml-[6px] h-3 w-3 rounded-full bg-black" />
        <span className="ml-[9px] flex h-[34px] w-[26px] items-center justify-center rounded bg-[#d0d0cf]">
          <span className="h-4 w-4 bg-black" />
        </span>
        <div className="ml-[7px] flex gap-3">
          {swatches.map((c) => (
            <span key={c} className={"h-4 w-4 border-[1.500px] border-[#222] " + c} />
          ))}
        </div>
        <span className="ml-[14px] h-[20px] w-[18px] bg-black" />
        <div className="ml-[10px] flex h-[33px] w-[82px] items-center rounded border border-[#d5d3d1] bg-[#fcfcfc] text-[14px] text-[#777]">
          <span className="w-[52px] border-r border-[#f1eeec] pl-[9px] tracking-[.4px]">Sans</span>
          <span className="pl-[5px]">12</span>
        </div>
      </div>
    </div>
  </>
);

const StatusBar = () => (
  <div className="flex h-[34px] shrink-0 items-center pl-[6px] text-[14px] text-[#5b5c59]">
    <span className="w-[40px]">Page</span>
    <div className="flex h-[31px] w-[68px] items-center justify-between rounded border border-[#d6d3d0] bg-[#fdfdfd] pr-1 pl-[9px] text-[#7b7c79]">
      <span>47</span>
      <svg width="8" height="20" viewBox="0 0 8 20"><path d="M0 4.500 L4 .500 L8 4.500Z M0 15.500 H8 L4 19.500Z" fill="#555" /></svg>
    </div>
    <span className="ml-[4px] w-[53px] whitespace-nowrap">of 47</span>
    <span className="w-[51px]">Layer:</span>
    <div className="flex h-[31px] w-[118px] items-center justify-between rounded border border-[#d6d3d0] bg-[#fdfdfd] pr-[9px] pl-2">
      <span>Layer 1</span>
      <svg width="10" height="5" viewBox="0 0 10 5"><path d="M0 0 H10 L5 5Z" fill="#555" /></svg>
    </div>
  </div>
);

export default function App() {
  return (
    <div className="flex h-[1080px] w-[1920px] flex-col overflow-hidden bg-[#f4f6f5] font-['Noto_Sans','Open_Sans',sans-serif]">
      <TopBar />
      <div className="flex min-h-0 flex-1">
        <Sidebar />
        <main className="flex min-w-0 flex-1 flex-col">
          <TitleBar />
          <Toolbar />
          <div className="flex h-[869px] shrink-0 justify-between">
            <div className="flex flex-col gap-[26px] pl-[279px]">
              <UpperPage />
              <LowerPage />
            </div>
            <div className="flex w-[9px] flex-col justify-end bg-[#fdfdfd] px-[2px] pb-[2px]">
              <span className="h-[42px] w-[5px] rounded-full bg-[#8b8b89]" />
            </div>
          </div>
          <StatusBar />
        </main>
      </div>
    </div>
  );
}
